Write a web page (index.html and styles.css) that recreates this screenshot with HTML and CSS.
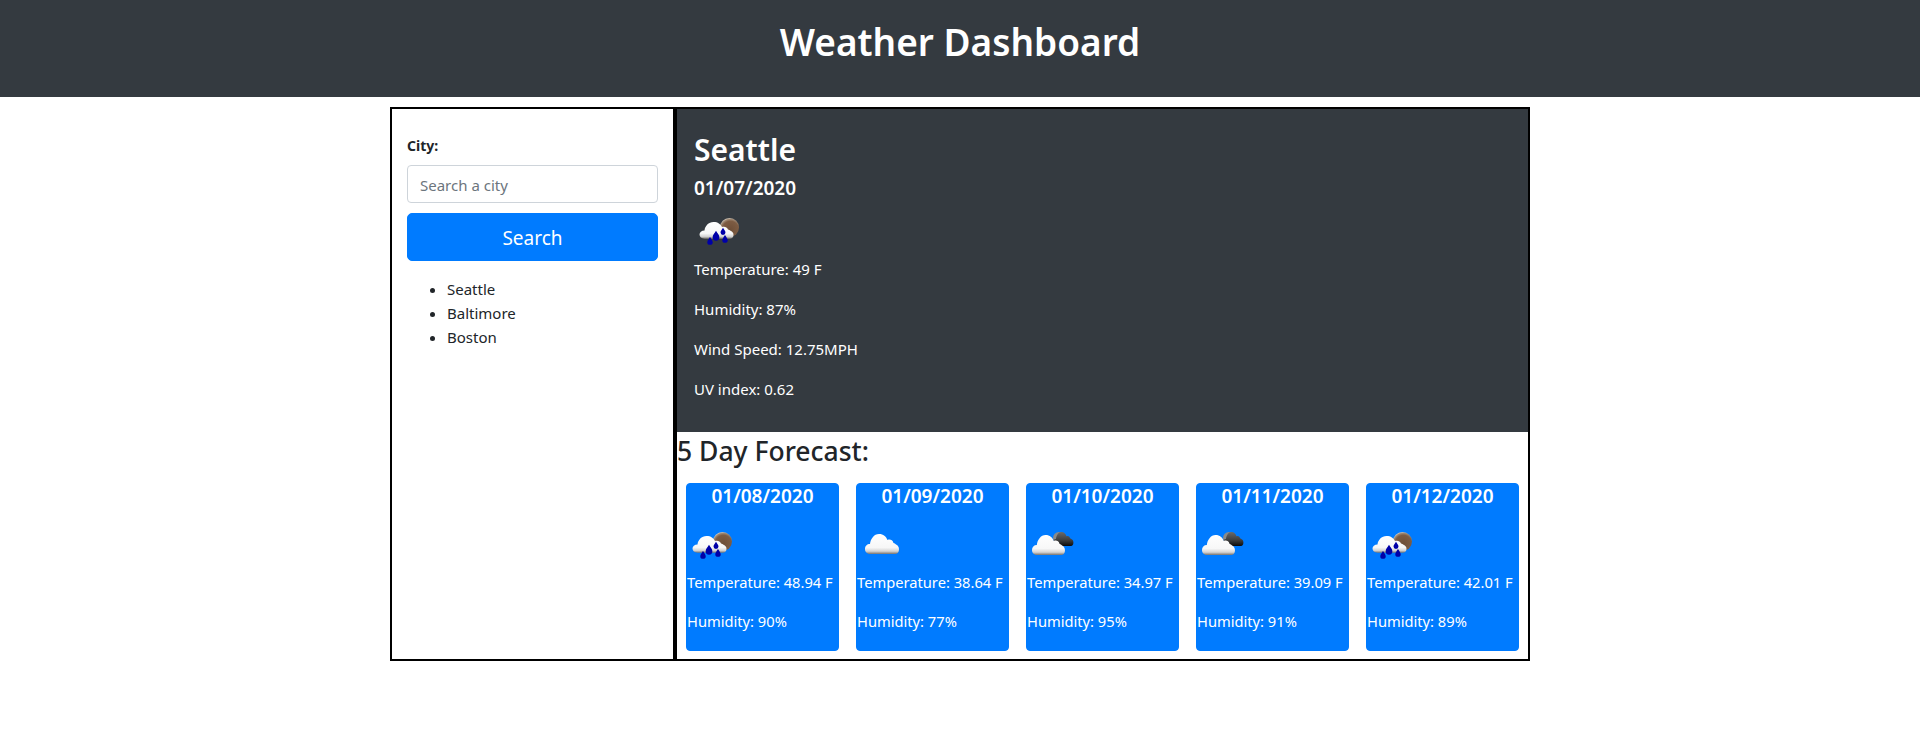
FILE: index.html
```html
<!DOCTYPE html>
<html lang="en">
<head>
    <meta charset="UTF-8">
    <meta name="viewport" content="width=device-width, initial-scale=1.0">
    <title>Weather Dashboard</title>
    <link rel="stylesheet" href="styles.css">
</head>
<body>
    <!-- shared weather icons -->
    <svg class="icon-defs" aria-hidden="true">
        <defs>
            <linearGradient id="cloudWhite" x1="0" y1="0" x2="0" y2="1">
                <stop offset="0" stop-color="#ffffff"/>
                <stop offset="0.68" stop-color="#f7f7f7"/>
                <stop offset="0.86" stop-color="#d4d4d4"/>
                <stop offset="1" stop-color="#77736f"/>
            </linearGradient>
            <linearGradient id="cloudDark" x1="0" y1="0" x2="0" y2="1">
                <stop offset="0" stop-color="#6a6a6a"/>
                <stop offset="0.6" stop-color="#3c3c3c"/>
                <stop offset="1" stop-color="#0c0c0c"/>
            </linearGradient>
            <radialGradient id="moonBrown" cx="0.55" cy="0.6" r="0.6">
                <stop offset="0" stop-color="#6e4f38"/>
                <stop offset="0.72" stop-color="#7d5c43"/>
                <stop offset="0.9" stop-color="#a08a75"/>
                <stop offset="1" stop-color="#d6cabc"/>
            </radialGradient>
            <path id="cloudShape" d="M5 20C1.8 20 0 17.6 0 15C0 12 2 10 5 10C5.5 5 9 0 14 0C18.5 0 21 2.5 22.5 6C24.5 5 27.5 5.5 28.5 9C29.5 9.3 30.3 9.8 31 10.5C33 11.5 34 13 34 15.5C34 18 32.5 20 30 20Z"/>
            <path id="dropShape" d="M0 -4.4C1 -2.6 2.6 -1.2 2.6 0.6A2.6 2.6 0 0 1 -2.6 0.6C-2.6 -1.2 -1 -2.6 0 -4.4Z"/>
            <symbol id="iconRain" viewBox="0 0 50 50">
                <circle cx="35.5" cy="22.5" r="9.5" fill="url(#moonBrown)"/>
                <use href="#cloudShape" transform="translate(5.5 17) scale(1 0.84)" fill="url(#cloudWhite)"/>
                <use href="#dropShape" transform="translate(16 36.5) scale(1.05)" fill="#0000a8"/>
                <use href="#dropShape" transform="translate(22 31.5) scale(1.3)" fill="#0000a8"/>
                <use href="#dropShape" transform="translate(29 27) scale(0.95)" fill="#0000a8"/>
                <use href="#dropShape" transform="translate(31 34.5) scale(1.05)" fill="#0000a8"/>
            </symbol>
            <symbol id="iconCloud" viewBox="0 0 50 50">
                <use href="#cloudShape" transform="translate(8 15)" fill="url(#cloudWhite)"/>
            </symbol>
            <symbol id="iconNightCloud" viewBox="0 0 50 50">
                <circle cx="32" cy="19" r="6" fill="#8a8a8a"/>
                <use href="#cloudShape" transform="translate(26 13) scale(0.6 0.7)" fill="url(#cloudDark)"/>
                <use href="#cloudShape" transform="translate(5 16) scale(0.97 1)" fill="url(#cloudWhite)"/>
            </symbol>
        </defs>
    </svg>

    <header class="site-header">
        <h1>Weather Dashboard</h1>
    </header>

    <main class="container">
        <aside class="sidebar">
            <form class="search-form">
                <label class="city-label" for="city">City:</label>
                <input class="city-input" type="text" id="city" placeholder="Search a city">
                <button class="search-btn" type="button">Search</button>
            </form>
            <ul class="city-list">
                <li>Seattle</li>
                <li>Baltimore</li>
                <li>Boston</li>
            </ul>
        </aside>

        <section class="content">
            <div class="current">
                <h2>Seattle</h2>
                <h4>01/07/2020</h4>
                <svg class="weather-icon"><use href="#iconRain"/></svg>
                <p>Temperature: 49 F</p>
                <p>Humidity: 87%</p>
                <p>Wind Speed: 12.75MPH</p>
                <p>UV index: 0.62</p>
            </div>

            <h3 class="forecast-title">5 Day Forecast:</h3>
            <div class="forecast">
                <div class="day-card">
                    <h5>01/08/2020</h5>
                    <svg class="weather-icon"><use href="#iconRain"/></svg>
                    <p>Temperature: 48.94 F</p>
                    <p>Humidity: 90%</p>
                </div>
                <div class="day-card">
                    <h5>01/09/2020</h5>
                    <svg class="weather-icon"><use href="#iconCloud"/></svg>
                    <p>Temperature: 38.64 F</p>
                    <p>Humidity: 77%</p>
                </div>
                <div class="day-card">
                    <h5>01/10/2020</h5>
                    <svg class="weather-icon"><use href="#iconNightCloud"/></svg>
                    <p>Temperature: 34.97 F</p>
                    <p>Humidity: 95%</p>
                </div>
                <div class="day-card">
                    <h5>01/11/2020</h5>
                    <svg class="weather-icon"><use href="#iconNightCloud"/></svg>
                    <p>Temperature: 39.09 F</p>
                    <p>Humidity: 91%</p>
                </div>
                <div class="day-card">
                    <h5>01/12/2020</h5>
                    <svg class="weather-icon"><use href="#iconRain"/></svg>
                    <p>Temperature: 42.01 F</p>
                    <p>Humidity: 89%</p>
                </div>
            </div>
        </section>
    </main>
</body>
</html>
```

FILE: styles.css
```css
* {
    box-sizing: border-box;
}
body {
    margin: 0;
    background-color: #fff;
    color: #212529;
    font-family: "Noto Sans", "Open Sans", sans-serif;
    font-size: 15px;
    line-height: 24px;
}
h1, h2, h3, h4, h5, p {
    margin: 0;
}
.icon-defs {
    position: absolute;
    width: 0;
    height: 0;
}

/* header */
.site-header {
    height: 97px;
    padding-top: 18px;
    background-color: #343a40;
    color: #fff;
    text-align: center;
}
.site-header h1 {
    font-size: 37px;
    line-height: 48px;
    font-weight: 600;
}

/* two columns */
.container {
    display: flex;
    width: 1140px;
    margin: 10px auto 0;
}
.sidebar {
    width: 285px;
    padding: 25px 15px 0;
    border: 2px solid #000;
}
.content {
    width: 855px;
    border: 2px solid #000;
}

/* search */
.search-form {
    display: flex;
    flex-direction: column;
}
.city-label {
    margin-bottom: 7px;
    font-size: 14px;
    font-weight: 700;
}
.city-input {
    height: 38px;
    padding: 7px 12px 5px;
    border: 1px solid #ced4da;
    border-radius: 4px;
    color: #495057;
    font-family: inherit;
    font-size: 15px;
}
.city-input::placeholder {
    color: #6c757d;
}
.search-btn {
    height: 48px;
    margin-top: 10px;
    padding-top: 3px;
    border: 1px solid #007bff;
    border-radius: 5px;
    background-color: #007bff;
    color: #fff;
    font-family: inherit;
    font-size: 19px;
    cursor: pointer;
}
.city-list {
    margin: 16px 0 0;
    padding-left: 40px;
}

/* current weather */
.current {
    padding: 22px 17px 15px;
    background-color: #343a40;
    color: #fff;
}
.current h2 {
    margin-bottom: 7px;
    font-size: 30px;
    line-height: 38px;
    font-weight: 600;
}
.current h4 {
    font-size: 19px;
    line-height: 24px;
    font-weight: 600;
}
.current p {
    margin-bottom: 16px;
}
.current .weather-icon {
    margin-top: 5px;
    margin-bottom: 2px;
}
.weather-icon {
    display: block;
    width: 50px;
    height: 50px;
}

/* forecast */
.forecast-title {
    padding: 2px 0 0;
    font-size: 26.5px;
    line-height: 34px;
    font-weight: 500;
}
.forecast {
    display: grid;
    grid-template-columns: repeat(5, 1fr);
    gap: 17px;
    padding: 15px 9px 8px;
}
.day-card {
    padding-bottom: 17px;
    border: 1px solid #007bff;
    border-radius: 4px;
    background-color: #007bff;
    color: #fff;
}
.day-card h5 {
    margin-bottom: 11px;
    font-size: 19px;
    line-height: 24px;
    font-weight: 600;
    text-align: center;
}
.day-card .weather-icon {
    margin-bottom: 1px;
}
.day-card p {
    font-size: 14.7px;
}
.day-card p + p {
    margin-top: 15px;
}
```
